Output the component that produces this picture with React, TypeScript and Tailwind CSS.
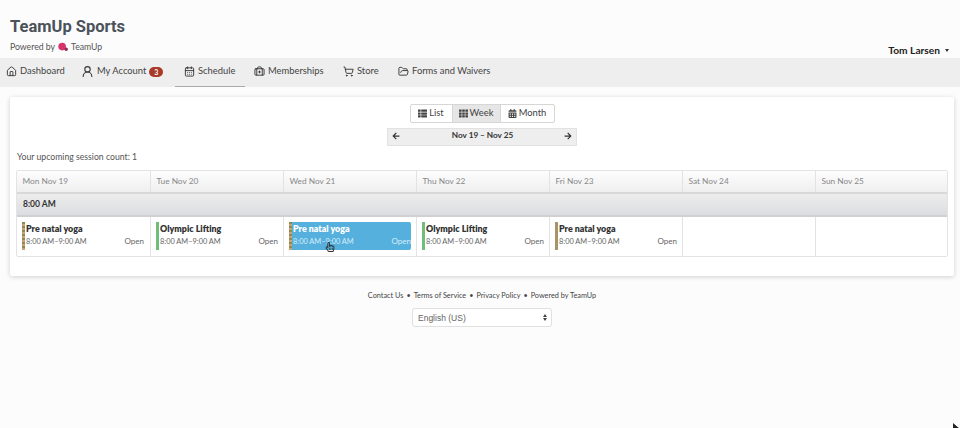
import { Home, UserRound, CalendarDays, BriefcaseMedical, ShoppingCart, FolderOpen } from 'lucide-react';
import { FaThList, FaTh, FaCalendarAlt, FaArrowLeft, FaArrowRight, FaRegHandPointer } from 'react-icons/fa';

const NAV = [
  { label: 'Dashboard', icon: Home, size: 11, className: 'pl-[6px] w-[84px]' },
  { label: 'My Account', icon: UserRound, size: 13, iconClass: '-ml-[3px]', badge: '3', className: 'w-[91px]' },
  { label: 'Schedule', icon: CalendarDays, size: 11, active: true, className: 'pl-[9px] w-[70px]' },
  { label: 'Memberships', icon: BriefcaseMedical, size: 11, className: 'pl-[9px] w-[89px]' },
  { label: 'Store', icon: ShoppingCart, size: 11, className: 'pl-[9px] w-[55px]' },
  { label: 'Forms and Waivers', icon: FolderOpen, size: 11, className: 'pl-[9px] w-[130px]' },
];

const DAYS = ['Mon Nov 19', 'Tue Nov 20', 'Wed Nov 21', 'Thu Nov 22', 'Fri Nov 23', 'Sat Nov 24', 'Sun Nov 25'];

const SESSIONS = [
  { title: 'Pre natal yoga', bar: 'striped' },
  { title: 'Olympic Lifting', bar: 'green' },
  { title: 'Pre natal yoga', bar: 'striped', selected: true },
  { title: 'Olympic Lifting', bar: 'green' },
  { title: 'Pre natal yoga', bar: 'tan' },
  null,
  null,
];

function SessionCard({ title, bar, selected }: { title: string; bar: string; selected?: boolean }) {
  const barClass =
    bar === 'green'
      ? 'bg-[#6fbf7a]'
      : bar === 'tan'
        ? 'bg-[#a89468]'
        : 'bg-[repeating-linear-gradient(180deg,#8f8a4e_0px,#8f8a4e_2px,#c9a27a_2px,#c9a27a_4px)]';

  return (
    <div
      className={`relative flex h-[28px] w-[122px] rounded-[2px] ${selected ? 'bg-[#55b0de] text-white' : 'bg-white text-[#333]'}`}
    >
      <div className={`h-full w-[3px] shrink-0 ${barClass}`} />
      <div className="min-w-0 flex-1 pl-[1px]">
        <div className="text-[8.9px] font-extrabold leading-[13px]">{title}</div>
        <div className={`flex items-baseline justify-between leading-[12px] ${selected ? 'text-[#d5ecf8]' : 'text-[#666]'}`}>
          <span className="text-[7.4px]">8:00 AM–9:00 AM</span>
          <span className="text-[8px]">Open</span>
        </div>
      </div>
      {selected && (
        <FaRegHandPointer className="absolute left-[36px] top-[20px] text-[10px] text-[#333]" />
      )}
    </div>
  );
}

export default function App() {
  return (
    <div className="relative h-[428px] w-[960px] overflow-hidden bg-[#fcfcfc] font-['Lato','Noto_Sans',sans-serif] text-[#444]">
      <header className="relative h-[58px]">
        <h1 className="pl-[10px] pt-[17px] font-['Roboto',sans-serif] text-[16.5px] font-bold leading-[20px] text-[#4a525a]">
          TeamUp Sports
        </h1>
        <div className="mt-[4px] flex items-center pl-[10px] text-[8.7px] leading-[12px] text-[#555]">
          Powered by
          <svg viewBox="0 0 12 11" className="ml-[3px] mr-[3px] h-[10px] w-[10px]">
            <circle cx="5" cy="5" r="4.6" fill="#d8326b" />
            <circle cx="9.8" cy="8.2" r="2" fill="#8a2b4e" />
          </svg>
          TeamUp
        </div>
        <div className="absolute right-[11px] top-[44px] flex items-center gap-[5px] text-[10.2px] font-bold leading-[12px] text-[#222]">
          Tom Larsen
          <span className="h-0 w-0 border-x-[2.5px] border-t-[3px] border-x-transparent border-t-[#333]" />
        </div>
      </header>

      <nav className="flex h-[29px] items-stretch bg-[#eeeeee] text-[9.4px] text-[#444]">
        {NAV.map(({ label, icon: Icon, size, iconClass, badge, active, className }) => (
          <div
            key={label}
            className={`flex items-center gap-[3px] pb-[2px] ${active ? 'border-b border-[#aaa] pb-[1px]' : ''} ${className}`}
          >
            <Icon size={size} strokeWidth={2} className={`shrink-0 text-[#333] ${iconClass ?? ''}`} />
            <span>{label}</span>
            {badge && (
              <span className="rounded-[5px] bg-[#a83a2a] px-[5px] text-[7px] font-bold leading-[10px] text-white">
                {badge}
              </span>
            )}
          </div>
        ))}
      </nav>

      <main className="ml-[10px] mt-[10px] h-[179px] w-[944px] rounded-[2px] bg-white px-[6px] pt-[7px] shadow-[0_1px_5px_rgba(0,0,0,0.18)]">
        <div className="flex flex-col items-center">
          <div className="flex h-[19px] w-[145px] items-stretch rounded-[2px] border border-[#d6d6d6] text-[9.4px] text-[#444]">
            <div className="flex w-[41px] items-center justify-center gap-[2px]">
              <FaThList className="text-[9px]" />
              List
            </div>
            <div className="flex w-[49px] items-center justify-center gap-[2px] border-x border-[#d6d6d6] bg-[#e6e6e6]">
              <FaTh className="text-[9px]" />
              Week
            </div>
            <div className="flex flex-1 items-center justify-center gap-[2px]">
              <FaCalendarAlt className="text-[9px]" />
              Month
            </div>
          </div>
          <div className="mt-[5px] flex h-[18px] w-[190px] items-center justify-between border border-[#e2e2e2] bg-[#eeeeee] pb-[3px] pl-[4px] pr-[4px] text-[#333]">
            <FaArrowLeft className="text-[8px]" />
            <span className="ml-[1px] text-[8.2px] font-bold">Nov 19 – Nov 25</span>
            <FaArrowRight className="text-[8px]" />
          </div>
        </div>

        <p className="ml-[1px] mt-[5px] text-[8.7px] leading-[12px] text-[#555]">Your upcoming session count: 1</p>

        <div className="mt-[7px] w-[932px] rounded-[2px] border border-[#e3e3e3]">
          <div className="grid h-[23px] grid-cols-[134px_133px_133px_133px_133px_133px_1fr] border-b-2 border-[#d8d8d8] bg-gradient-to-b from-[#fdfdfd] to-[#efeff0]">
            {DAYS.map((day) => (
              <div key={day} className="flex items-center border-r border-[#e3e3e3] pl-[5.5px] text-[8.3px] text-[#888] last:border-r-0">
                {day}
              </div>
            ))}
          </div>
          <div className="flex h-[23px] items-center border-b-2 border-[#d0d0d0] bg-gradient-to-b from-[#ededee] to-[#dcdde0] pl-[6px] text-[8.5px] font-bold text-[#333]">
            8:00 AM
          </div>
          <div className="grid h-[39px] grid-cols-[134px_133px_133px_133px_133px_133px_1fr]">
            {SESSIONS.map((session, i) => (
              <div key={i} className="flex items-start border-r border-[#e3e3e3] pl-[5px] pt-[5px] last:border-r-0">
                {session && <SessionCard {...session} />}
              </div>
            ))}
          </div>
        </div>
      </main>

      <footer className="mt-[14px] flex flex-col items-center pl-[4px]">
        <div className="flex items-center gap-[3px] text-[7.3px] leading-[12px] text-[#444]">
          <span>Contact Us</span>•<span>Terms of Service</span>•<span>Privacy Policy</span>•<span>Powered by TeamUp</span>
        </div>
        <div className="mt-[6px] flex h-[19px] w-[140px] items-center justify-between rounded-[3px] border border-[#e0e0e0] bg-white pl-[5px] pr-[4px] font-['Liberation_Sans',sans-serif] text-[8.5px] text-[#666]">
          <span className="pt-[1px]">English (US)</span>
          <span className="flex flex-col gap-[1px]">
            <span className="h-0 w-0 border-x-[2px] border-b-[3px] border-x-transparent border-b-[#444]" />
            <span className="h-0 w-0 border-x-[2px] border-t-[3px] border-x-transparent border-t-[#444]" />
          </span>
        </div>
      </footer>

      {/* stray mouse pointer in the corner */}
      <svg viewBox="0 0 8 8" className="absolute left-[953px] top-[423px] h-[8px] w-[8px]">
        <path d="M0 0 L7 6 L3 6 L0 8 Z" fill="#222" />
      </svg>
    </div>
  );
}
